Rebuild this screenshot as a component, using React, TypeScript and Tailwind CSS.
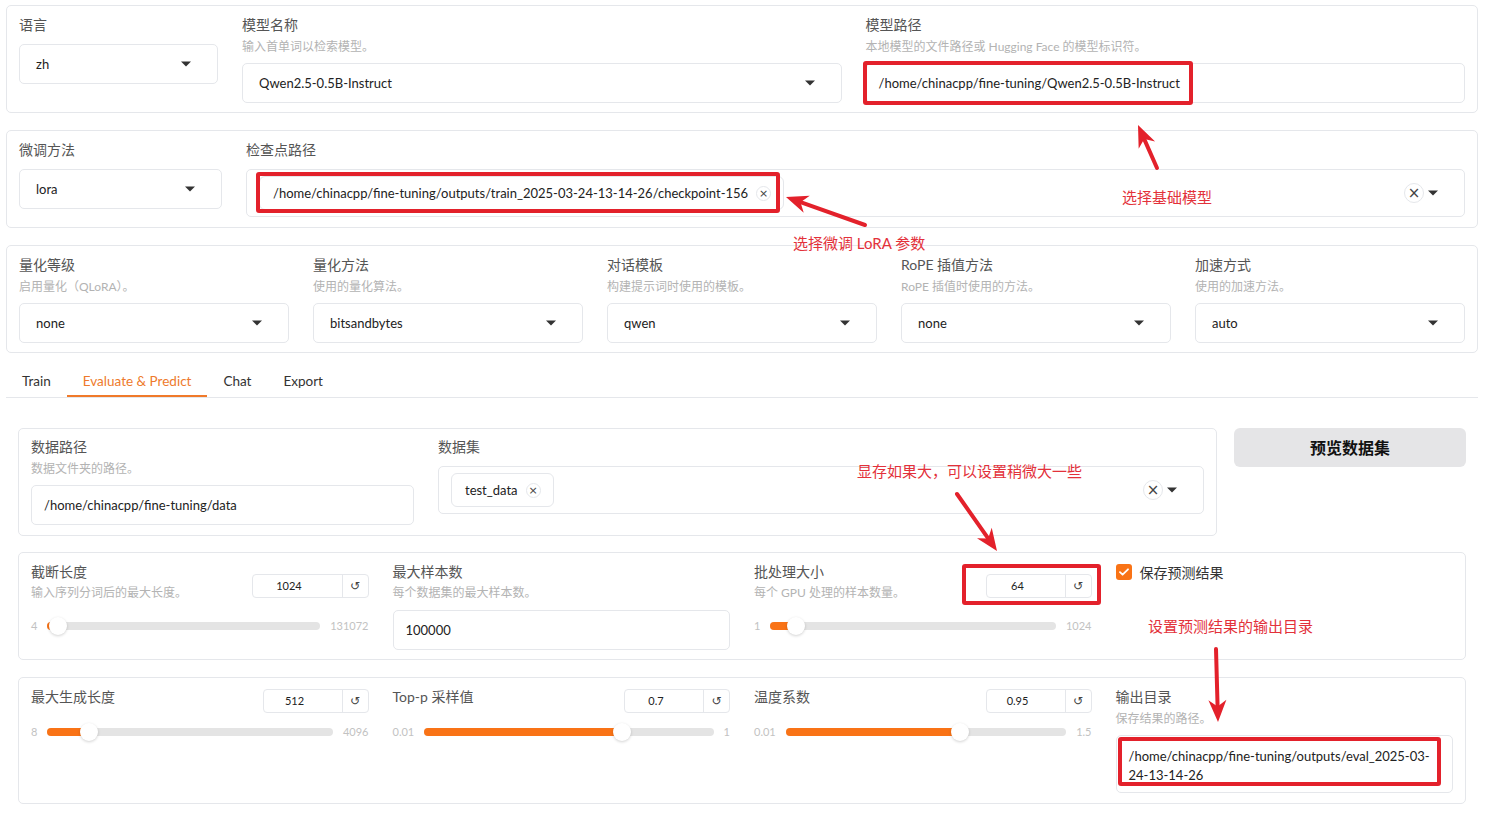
import React from 'react';

const font = "font-['Lato','Noto_Sans_CJK_SC',sans-serif]";

function Caret() {
  return (
    <svg width="10" height="6" viewBox="0 0 10 6" className="shrink-0">
      <path d="M0 0.5h10L5 5.5z" fill="#333" />
    </svg>
  );
}

function Panel({ children, className = '' }: { children: React.ReactNode; className?: string }) {
  return <div className={`rounded-[5px] border border-[#e5e7eb] bg-white ${className}`}>{children}</div>;
}

function Label({ children }: { children: React.ReactNode }) {
  return <div className="h-5 text-[14px] leading-5 text-[#555]">{children}</div>;
}

function Desc({ children }: { children: React.ReactNode }) {
  return <div className="mt-[3px] text-[12px] leading-[18px] text-[#b3b3b3]">{children}</div>;
}

function Dropdown({ value, className = '' }: { value: string; className?: string }) {
  return (
    <div
      className={`flex h-[40px] items-center justify-between rounded-[5px] border border-[#e5e7eb] bg-white pl-4 pr-[26px] text-[13px] text-[#222] ${className}`}
    >
      <span className="pt-[2px]">{value}</span>
      <Caret />
    </div>
  );
}

function TextBox({ value, className = '' }: { value: string; className?: string }) {
  return (
    <div className={`flex h-[40px] items-center rounded-[5px] border border-[#e5e7eb] bg-white px-3 pt-[2px] text-[13px] text-[#222] ${className}`}>
      {value}
    </div>
  );
}

function ClearButton({ size }: { size: 'sm' | 'md' }) {
  const cls =
    size === 'sm'
      ? 'h-[15px] w-[15px] text-[11px]'
      : 'h-[20px] w-[20px] text-[15px]';
  return (
    <span
      className={`flex shrink-0 items-center justify-center rounded-full border border-[#e5e7eb] leading-none text-[#444] font-['DejaVu_Sans',sans-serif] ${cls}`}
    >
      ×
    </span>
  );
}

function Chip({ text }: { text: string }) {
  return (
    <div className="flex h-[34px] items-center gap-2 rounded-[6px] border border-[#e5e7eb] bg-white pl-[13px] pr-[12px] text-[13px] text-[#222]">
      <span className="pt-[2px]">{text}</span>
      <ClearButton size="sm" />
    </div>
  );
}

function MultiSelect({ chip, className = '' }: { chip: string; className?: string }) {
  return (
    <div className={`flex h-[48px] items-center justify-between rounded-[5px] border border-[#e5e7eb] bg-white pl-3 pr-[26px] ${className}`}>
      <Chip text={chip} />
      <div className="flex items-center gap-1">
        <ClearButton size="md" />
        <Caret />
      </div>
    </div>
  );
}

function NumberBox({ value, width, className = '' }: { value: string; width: string; className?: string }) {
  return (
    <div className={`flex h-[24px] shrink-0 rounded-[4px] border border-[#e5e7eb] bg-white text-[11px] text-[#222] ${width} ${className}`}>
      <div className="flex flex-1 items-center justify-center pr-4 pt-[1px]">{value}</div>
      <div className="flex w-[26px] items-center justify-center border-l border-[#e5e7eb] font-['DejaVu_Sans',sans-serif] text-[12px] text-[#444]">
        ↺
      </div>
    </div>
  );
}

type SliderProps = { min: number; max: number; value: number; minText: string; maxText: string; className?: string };

function Slider({ min, max, value, minText, maxText, className = '' }: SliderProps) {
  const pct = (value - min) / (max - min);
  return (
    <div className={`flex h-[18px] items-center gap-[10px] text-[11px] text-[#c2c2c2] ${className}`}>
      <span>{minText}</span>
      <div className="relative h-[8px] flex-1 rounded-full bg-[#e4e4e4]">
        <div
          className="absolute inset-y-0 left-0 rounded-full bg-[#f97316]"
          style={{ width: `calc(9px + ${pct} * (100% - 18px))` }}
        />
        <div
          className="absolute top-1/2 h-[18px] w-[18px] -translate-y-1/2 rounded-full bg-white shadow-[0_1px_3px_rgba(0,0,0,0.18)]"
          style={{ left: `calc(${pct} * (100% - 18px))` }}
        />
      </div>
      <span>{maxText}</span>
    </div>
  );
}

function SliderField({
  label,
  desc,
  value,
  boxWidth,
  slider,
}: {
  label: string;
  desc?: string;
  value: string;
  boxWidth: string;
  slider: SliderProps;
}) {
  return (
    <div>
      <div className="flex items-start justify-between">
        <div>
          <Label>{label}</Label>
          {desc && <div className="mt-[2px] text-[12px] leading-[18px] text-[#b3b3b3]">{desc}</div>}
        </div>
        <NumberBox value={value} width={boxWidth} className={desc ? 'mt-[12px]' : 'mt-[2px]'} />
      </div>
      <Slider {...slider} className={desc ? 'mt-[15px]' : 'mt-[10px]'} />
    </div>
  );
}

// red call-outs drawn on top of the form
function Arrow({ from, to }: { from: [number, number]; to: [number, number] }) {
  const [tx, ty] = from;
  const [px, py] = to;
  const len = Math.hypot(px - tx, py - ty);
  const dx = (px - tx) / len;
  const dy = (py - ty) / len;
  const L = 22;
  const W = 9;
  const bx = px - dx * L;
  const by = py - dy * L;
  const nx = -dy;
  const ny = dx;
  const mx = px - dx * L * 0.7;
  const my = py - dy * L * 0.7;
  const head = `${px},${py} ${bx + nx * W},${by + ny * W} ${mx},${my} ${bx - nx * W},${by - ny * W}`;
  return (
    <g>
      <line x1={tx} y1={ty} x2={mx} y2={my} stroke="#e3212b" strokeWidth={4} strokeLinecap="round" />
      <polygon points={head} fill="#e3212b" />
    </g>
  );
}

function Marks() {
  const box = 'absolute rounded-[3px] border-[4px] border-[#e3212b]';
  const note = 'absolute whitespace-nowrap text-[15px] leading-5 text-[#e3313a]';
  return (
    <div className="pointer-events-none absolute left-0 top-0 h-full w-full">
      <div className={`${box} left-[863px] top-[61px] h-[44px] w-[330px]`} />
      <div className={`${box} left-[256px] top-[172px] h-[41px] w-[524px]`} />
      <div className={`${box} left-[962px] top-[564px] h-[41px] w-[139px]`} />
      <div className={`${box} left-[1118px] top-[737px] h-[49px] w-[323px]`} />

      <div className={`${note} left-[1122px] top-[187px]`}>选择基础模型</div>
      <div className={`${note} left-[793px] top-[233px]`}>选择微调 LoRA 参数</div>
      <div className={`${note} left-[857px] top-[461px]`}>显存如果大，可以设置稍微大一些</div>
      <div className={`${note} left-[1148px] top-[616px]`}>设置预测结果的输出目录</div>

      <svg className="absolute left-0 top-0" width="1485" height="816">
        <Arrow from={[1157, 168]} to={[1138, 125]} />
        <Arrow from={[865, 225]} to={[786, 197]} />
        <Arrow from={[957, 494]} to={[997, 551]} />
        <Arrow from={[1216, 649]} to={[1218, 722]} />
      </svg>
    </div>
  );
}

const tabs = ['Train', 'Evaluate & Predict', 'Chat', 'Export'];

export default function App() {
  return (
    <div className={`relative min-h-screen w-full bg-white pl-[6px] pr-[7px] pt-[5px] ${font}`}>
      <div className="flex flex-col gap-[17px]">
        <Panel className="flex gap-6 px-3 pb-[9px] pt-[9px]">
          <div className="w-[199px]">
            <Label>语言</Label>
            <Dropdown value="zh" className="mt-[9px]" />
          </div>
          <div className="flex-1">
            <Label>模型名称</Label>
            <Desc>输入首单词以检索模型。</Desc>
            <Dropdown value="Qwen2.5-0.5B-Instruct" className="mt-[7px]" />
          </div>
          <div className="flex-1">
            <Label>模型路径</Label>
            <Desc>本地模型的文件路径或 Hugging Face 的模型标识符。</Desc>
            <TextBox value="/home/chinacpp/fine-tuning/Qwen2.5-0.5B-Instruct" className="mt-[7px]" />
          </div>
        </Panel>

        <Panel className="flex gap-6 px-3 pb-[10px] pt-[9px]">
          <div className="w-[203px]">
            <Label>微调方法</Label>
            <Dropdown value="lora" className="mt-[9px]" />
          </div>
          <div className="flex-1">
            <Label>检查点路径</Label>
            <MultiSelect
              chip="/home/chinacpp/fine-tuning/outputs/train_2025-03-24-13-14-26/checkpoint-156"
              className="mt-[9px]"
            />
          </div>
        </Panel>

        <Panel className="grid grid-cols-5 gap-6 px-3 pb-[9px] pt-[9px]">
          {[
            ['量化等级', '启用量化（QLoRA）。', 'none'],
            ['量化方法', '使用的量化算法。', 'bitsandbytes'],
            ['对话模板', '构建提示词时使用的模板。', 'qwen'],
            ['RoPE 插值方法', 'RoPE 插值时使用的方法。', 'none'],
            ['加速方式', '使用的加速方法。', 'auto'],
          ].map(([label, desc, value]) => (
            <div key={label}>
              <Label>{label}</Label>
              <Desc>{desc}</Desc>
              <Dropdown value={value} className="mt-[7px]" />
            </div>
          ))}
        </Panel>
      </div>

      <div className="mt-[12px] flex border-b border-[#e5e7eb]">
        {tabs.map((t) => (
          <div
            key={t}
            className={`flex h-[32px] items-center border-b-2 px-4 pt-[3px] text-[13.5px] ${
              t === 'Evaluate & Predict' ? 'border-[#f07a2a] text-[#ee7a2c]' : 'border-transparent text-[#333]'
            }`}
          >
            {t}
          </div>
        ))}
      </div>

      <div className="px-3 pt-[30px]">
        <div className="flex items-start gap-[17px]">
          <Panel className="flex flex-1 gap-6 px-3 pb-[10px] pt-[8px]">
            <div className="flex-1">
              <Label>数据路径</Label>
              <Desc>数据文件夹的路径。</Desc>
              <TextBox value="/home/chinacpp/fine-tuning/data" className="mt-[7px]" />
            </div>
            <div className="flex-[2]">
              <Label>数据集</Label>
              <MultiSelect chip="test_data" className="mt-[9px]" />
            </div>
          </Panel>
          <div className="flex h-[39px] w-[232px] items-center justify-center rounded-[6px] bg-[#e5e5e7] text-[16px] font-bold text-[#111]">
            预览数据集
          </div>
        </div>

        <Panel className="mt-[16px] grid grid-cols-4 gap-6 px-3 pb-[9px] pt-[9px]">
          <SliderField
            label="截断长度"
            desc="输入序列分词后的最大长度。"
            value="1024"
            boxWidth="w-[117px]"
            slider={{ min: 4, max: 131072, value: 1024, minText: '4', maxText: '131072' }}
          />
          <div>
            <Label>最大样本数</Label>
            <div className="mt-[2px] text-[12px] leading-[18px] text-[#b3b3b3]">每个数据集的最大样本数。</div>
            <TextBox value="100000" className="mt-[8px]" />
          </div>
          <SliderField
            label="批处理大小"
            desc="每个 GPU 处理的样本数量。"
            value="64"
            boxWidth="w-[106px]"
            slider={{ min: 1, max: 1024, value: 64, minText: '1', maxText: '1024' }}
          />
          <div className="flex h-5 items-center gap-2">
            <span className="flex h-4 w-4 items-center justify-center rounded-[3px] bg-[#f97316]">
              <svg width="10" height="8" viewBox="0 0 10 8">
                <path d="M1 4.2l2.6 2.5L9 1.3" fill="none" stroke="#fff" strokeWidth="1.8" strokeLinecap="round" strokeLinejoin="round" />
              </svg>
            </span>
            <span className="text-[14px] text-[#333]">保存预测结果</span>
          </div>
        </Panel>

        <Panel className="mt-[17px] grid grid-cols-4 gap-6 px-3 pb-[10px] pt-[9px]">
          <SliderField
            label="最大生成长度"
            value="512"
            boxWidth="w-[106px]"
            slider={{ min: 8, max: 4096, value: 512, minText: '8', maxText: '4096' }}
          />
          <SliderField
            label="Top-p 采样值"
            value="0.7"
            boxWidth="w-[106px]"
            slider={{ min: 0.01, max: 1, value: 0.7, minText: '0.01', maxText: '1' }}
          />
          <SliderField
            label="温度系数"
            value="0.95"
            boxWidth="w-[106px]"
            slider={{ min: 0.01, max: 1.5, value: 0.95, minText: '0.01', maxText: '1.5' }}
          />
          <div>
            <Label>输出目录</Label>
            <Desc>保存结果的路径。</Desc>
            <div className="mt-[7px] h-[58px] whitespace-nowrap rounded-[5px] border border-[#e5e7eb] bg-white px-3 pt-[11px] text-[13px] leading-[19px] text-[#222]">
              /home/chinacpp/fine-tuning/outputs/eval_2025-03-
              <br />
              24-13-14-26
            </div>
          </div>
        </Panel>
      </div>

      <Marks />
    </div>
  );
}
